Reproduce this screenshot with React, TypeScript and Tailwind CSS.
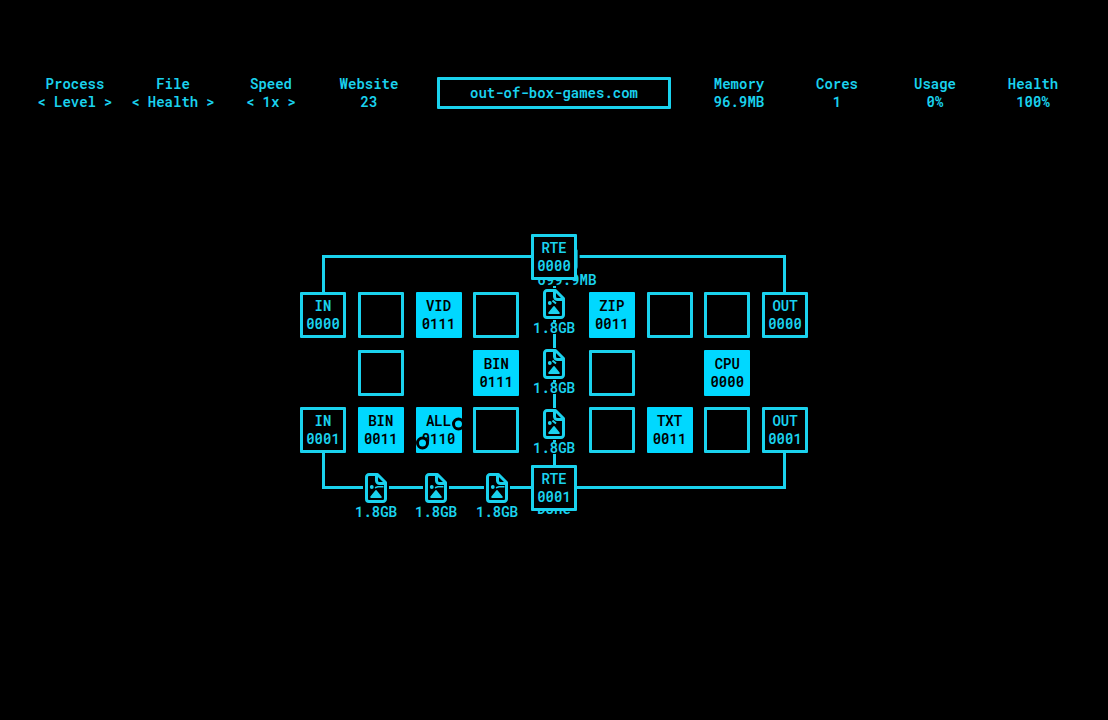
import { useState } from 'react';

interface Cell {
  name?: string;
  address?: string;
  filled?: boolean;
  router?: boolean;
  ports?: boolean;
  place: string;
}

interface DataFile {
  size: string;
  flow: 'down' | 'across';
  place: string;
}

const cells: Cell[] = [
  { name: 'RTE', address: '0000', router: true, place: 'col-start-5 row-start-1' },

  { name: 'IN', address: '0000', place: 'col-start-1 row-start-2' },
  { place: 'col-start-2 row-start-2' },
  { name: 'VID', address: '0111', filled: true, place: 'col-start-3 row-start-2' },
  { place: 'col-start-4 row-start-2' },
  { name: 'ZIP', address: '0011', filled: true, place: 'col-start-6 row-start-2' },
  { place: 'col-start-7 row-start-2' },
  { place: 'col-start-8 row-start-2' },
  { name: 'OUT', address: '0000', place: 'col-start-9 row-start-2' },

  { place: 'col-start-2 row-start-3' },
  { name: 'BIN', address: '0111', filled: true, place: 'col-start-4 row-start-3' },
  { place: 'col-start-6 row-start-3' },
  { name: 'CPU', address: '0000', filled: true, place: 'col-start-8 row-start-3' },

  { name: 'IN', address: '0001', place: 'col-start-1 row-start-4' },
  { name: 'BIN', address: '0011', filled: true, place: 'col-start-2 row-start-4' },
  { name: 'ALL', address: '0110', filled: true, ports: true, place: 'col-start-3 row-start-4' },
  { place: 'col-start-4 row-start-4' },
  { place: 'col-start-6 row-start-4' },
  { name: 'TXT', address: '0011', filled: true, place: 'col-start-7 row-start-4' },
  { place: 'col-start-8 row-start-4' },
  { name: 'OUT', address: '0001', place: 'col-start-9 row-start-4' },

  { name: 'RTE', address: '0001', router: true, place: 'col-start-5 row-start-5' },
];

// files travelling along the wires
const files: DataFile[] = [
  { size: '699.9MB', flow: 'across', place: 'left-[267px] top-[6px]' },
  { size: '1.8GB', flow: 'down', place: 'left-[254px] top-[54px]' },
  { size: '1.8GB', flow: 'down', place: 'left-[254px] top-[114px]' },
  { size: '1.8GB', flow: 'down', place: 'left-[254px] top-[174px]' },
  { size: 'Done', flow: 'down', place: 'left-[254px] top-[235px]' },
  { size: '1.8GB', flow: 'across', place: 'left-[76px] top-[238px]' },
  { size: '1.8GB', flow: 'across', place: 'left-[136px] top-[238px]' },
  { size: '1.8GB', flow: 'across', place: 'left-[197px] top-[238px]' },
];

const processModes = ['Level', 'Size', 'Order'];
const fileModes = ['Health', 'Size', 'Type'];
const speeds = ['1x', '2x', '4x'];

function Stat({ label, value }: { label: string; value: string }) {
  return (
    <div className="text-center">
      <p>{label}</p>
      <p>{value}</p>
    </div>
  );
}

function Stepper({ label, options }: { label: string; options: string[] }) {
  const [index, setIndex] = useState(0);
  const step = (by: number) => setIndex((index + by + options.length) % options.length);

  return (
    <div className="flex flex-col items-center">
      <p>{label}</p>
      <div className="flex gap-2">
        <button aria-label={`Previous ${label}`} onClick={() => step(-1)} className="cursor-pointer">
          &lt;
        </button>
        <span>{options[index]}</span>
        <button aria-label={`Next ${label}`} onClick={() => step(1)} className="cursor-pointer">
          &gt;
        </button>
      </div>
    </div>
  );
}

function FileMarker({ file }: { file: DataFile }) {
  return (
    <div className={`absolute ${file.place} -translate-x-1/2 flex flex-col items-center gap-0.5`}>
      <svg className="w-7 h-8" viewBox="0 0 28 32" fill="none" stroke="currentColor" strokeWidth={3} strokeLinejoin="round">
        <rect x="1" width="26" height="32" fill="black" stroke="none" />
        <path d="M7 2.500h8.500l8 8V27a2.500 2.500 0 0 1-2.500 2.500H7A2.500 2.500 0 0 1 4.500 27V5A2.500 2.500 0 0 1 7 2.500z" />
        <path d="M14.500 3v5.500a3 3 0 0 0 3 3H23" />
        <circle cx="9.800" cy="15" r="1.900" fill="currentColor" stroke="none" />
        {file.flow === 'down' ? (
          <path d="M12.500 12.500l3.500 3" strokeWidth={2} />
        ) : (
          <path d="M13 15.800l3-1h5.500" strokeWidth={1.500} />
        )}
        <path d="M14 19l4.800 6H9.200z" fill="currentColor" strokeWidth={2} />
      </svg>
      <span className="bg-black leading-3">{file.size}</span>
    </div>
  );
}

function BoardCell({ cell }: { cell: Cell }) {
  return (
    <button
      aria-label={cell.name ? undefined : 'Empty slot'}
      className={`relative flex flex-col items-center justify-center rounded-[1px] border-3 cursor-pointer ${cell.place} ${
        cell.filled ? 'border-[#00d8ff] bg-[#00d8ff] text-black' : 'border-[#1ad2ee] bg-black'
      } ${cell.router ? 'z-10' : ''}`}
    >
      {cell.name && (
        <>
          <span>{cell.name}</span>
          <span>{cell.address}</span>
        </>
      )}
      {cell.ports && (
        <svg className="absolute -inset-[3px] w-[46px] h-[46px] overflow-visible" viewBox="0 0 46 46" fill="#00d8ff" stroke="black" strokeWidth={3}>
          <circle cx="6.500" cy="36" r="5" />
          <circle cx="42.500" cy="17" r="5" />
        </svg>
      )}
    </button>
  );
}

export default function App() {
  return (
    <main className="min-h-screen bg-black px-[26px] pt-[75px] pb-10 font-['Roboto_Mono','DejaVu_Sans_Mono',monospace] text-sm leading-[18px] font-semibold text-[#1ad2ee]">
      <header className="grid grid-cols-[repeat(4,1fr)_272px_repeat(4,1fr)] items-center">
        <Stepper label="Process" options={processModes} />
        <Stepper label="File" options={fileModes} />
        <Stepper label="Speed" options={speeds} />
        <Stat label="Website" value="23" />
        <div className="mx-auto flex h-8 w-[234px] items-center justify-center rounded-[1px] border-3 border-[#1ad2ee]">
          out-of-box-games.com
        </div>
        <Stat label="Memory" value="96.9MB" />
        <Stat label="Cores" value="1" />
        <Stat label="Usage" value="0%" />
        <Stat label="Health" value="100%" />
      </header>

      <section className="relative mx-auto mt-[123px] grid h-[277px] w-[508px] grid-cols-[repeat(9,46px)] grid-rows-[repeat(5,46px)] content-between justify-between">
        <svg className="absolute inset-0 w-full h-full" viewBox="0 0 508 277" fill="none" stroke="currentColor" strokeWidth={3}>
          <path d="M23.500 60V22.500H484.500V60" />
          <path d="M23.500 216V253.500H484.500V216" />
          <path d="M254.500 40V236" />
        </svg>
        {files.map((file) => (
          <FileMarker key={file.place} file={file} />
        ))}
        {cells.map((cell) => (
          <BoardCell key={cell.place} cell={cell} />
        ))}
      </section>
    </main>
  );
}
